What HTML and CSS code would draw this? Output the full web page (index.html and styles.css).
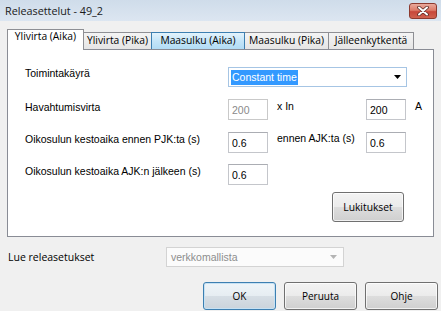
FILE: index.html
```html
<!DOCTYPE html>
<html>
<head>
<meta charset="utf-8">
<title>Releasettelut</title>
<link rel="stylesheet" href="styles.css">
</head>
<body>
<div class="window">
  <div class="titlebar">
    <span class="title">Releasettelut - 49_2</span>
    <div class="close">
      <svg width="12" height="10" viewBox="0 0 12 10">
        <path d="M2 1.5 L10 8.5 M10 1.5 L2 8.5" stroke="#5a2a24" stroke-width="3.6" stroke-linecap="round"/>
        <path d="M2 1.5 L10 8.5 M10 1.5 L2 8.5" stroke="#ffffff" stroke-width="2" stroke-linecap="round"/>
      </svg>
    </div>
  </div>

  <div class="tabs">
    <div class="tab active">Ylivirta (Aika)</div>
    <div class="tab t2">Ylivirta (Pika)</div>
    <div class="tab hover t3">Maasulku (Aika)</div>
    <div class="tab t4">Maasulku (Pika)</div>
    <div class="tab t5">Jälleenkytkentä</div>
  </div>

  <div class="panel">
    <div class="row r1">
      <div class="lbl up">Toimintakäyrä</div>
      <div class="combo main">
        <span class="sel">Constant time</span>
        <svg class="arrow" width="7" height="4" viewBox="0 0 7 4"><polygon points="0,0 7,0 3.5,4" fill="#000"/></svg>
      </div>
    </div>
    <div class="row r2">
      <div class="lbl">Havahtumisvirta</div>
      <div class="field disabled">200</div>
      <div class="unit">x In</div>
      <div class="field">200</div>
      <div class="unit">A</div>
    </div>
    <div class="row r3">
      <div class="lbl nudge">Oikosulun kestoaika ennen PJK:ta (s)</div>
      <div class="field">0.6</div>
      <div class="unit nudge">ennen AJK:ta (s)</div>
      <div class="field">0.6</div>
    </div>
    <div class="row r4">
      <div class="lbl nudge">Oikosulun kestoaika AJK:n jälkeen (s)</div>
      <div class="field">0.6</div>
    </div>
    <div class="row r5">
      <div class="btn lock">Lukitukset</div>
    </div>
  </div>

  <div class="readrow">
    <div class="readlbl">Lue releasetukset</div>
    <div class="combo off">
      <span>verkkomallista</span>
      <svg class="arrow" width="7" height="4" viewBox="0 0 7 4"><polygon points="0,0 7,0 3.5,4" fill="#b4b4b4"/></svg>
    </div>
  </div>

  <div class="buttons">
    <div class="btn default">OK</div>
    <div class="btn">Peruuta</div>
    <div class="btn">Ohje</div>
  </div>
</div>
</body>
</html>
```

FILE: styles.css
```css
html, body {
  margin: 0;
  padding: 0;
  background: #f0f0f0;
}

.window {
  width: 441px;
  height: 311px;
  overflow: hidden;
  background: #f0f0f0;
  font-family: "Liberation Sans", Arial, sans-serif;
  font-size: 10.5px;
  color: #000;
}

/* title bar */
.titlebar {
  height: 21px;
  display: flex;
  justify-content: space-between;
  align-items: center;
  background: linear-gradient(#cfdcea, #dce6f1);
  padding-left: 5px;
}

.title {
  font-family: "Open Sans", sans-serif;
  font-size: 10.8px;
  color: #1a1a1a;
}

.close {
  align-self: flex-start;
  margin-top: 3px;
  margin-right: 4px;
  width: 26px;
  height: 14px;
  border: 1px solid #8d3a2f;
  border-radius: 3px;
  background: linear-gradient(#e9a99c 0%, #dd7b69 45%, #c7473a 55%, #d0624f 100%);
  display: flex;
  align-items: center;
  justify-content: center;
}

/* tabs */
.tabs {
  display: flex;
  align-items: flex-end;
  height: 20px;
  margin-top: 8px;
  padding-left: 7px;
  position: relative;
  z-index: 1;
  font-family: "Open Sans", sans-serif;
  font-size: 10.3px;
}

.tab {
  box-sizing: border-box;
  height: 17px;
  line-height: 15px;
  border: 1px solid #8e8f94;
  border-bottom: none;
  background: linear-gradient(#f4f4f4, #e5e5e5);
  text-align: center;
  color: #000;
  margin-left: -1px;
  white-space: nowrap;
}

.tab.active {
  height: 21px;
  margin-bottom: -1px;
  margin-left: 0;
  line-height: 13px;
  background: #fff;
  width: 77px;
  position: relative;
  z-index: 2;
}

.tab.t2 { width: 69px; }
.tab.t3 { width: 94px; }
.tab.t4 { width: 85px; }
.tab.t5 { width: 86px; }

.tab.hover {
  border-color: #3c7fb1;
  background: linear-gradient(#e3f3fc, #c4e5f8 50%, #b2dcf5);
  position: relative;
  z-index: 1;
}

/* panel */
.panel {
  margin: 0 7px;
  height: 188px;
  box-sizing: border-box;
  border: 1px solid #898c95;
  background: #fff;
  padding: 17px 0 0 17px;
}

.row {
  display: grid;
  grid-template-columns: 203px 40px 98px 40px auto;
  align-items: start;
}

.r2 { margin-top: 12px; }
.r3 { margin-top: 12px; }
.r4 { margin-top: 11px; }
.r5 { margin-top: 7px; }

.lbl {
  line-height: 16px;
  white-space: nowrap;
}

.lbl.up { margin-top: -2px; }
.nudge { margin-top: -1px; }

.unit {
  line-height: 15px;
  padding-left: 9px;
  white-space: nowrap;
}

.field {
  box-sizing: border-box;
  height: 21px;
  width: 40px;
  border: 1px solid #c4c6cb;
  border-top-color: #abadb3;
  background: #fff;
  padding-left: 3px;
  line-height: 20px;
  font-size: 10.5px;
}

.field.disabled {
  color: #8a8a8a;
  border-color: #c9c9c9;
}

/* combos */
.combo {
  box-sizing: border-box;
  height: 20px;
  display: flex;
  align-items: center;
  justify-content: space-between;
  background: #fff;
  padding: 0 5px 0 2px;
}

.combo.main {
  grid-column: 2 / 6;
  width: 179px;
  border: 1px solid #a6c5e4;
}

.sel {
  background: #3399ff;
  color: #fff;
  line-height: 15px;
  padding: 0 1px;
}

.combo.off {
  width: 178px;
  border: 1px solid #d3d3d3;
  background: #fbfbfb;
  color: #8d8d8d;
  padding-left: 4px;
  padding-right: 6px;
}

/* buttons */
.btn {
  box-sizing: border-box;
  border: 1px solid #707070;
  border-radius: 3px;
  background: linear-gradient(#f3f3f3 0%, #ebebeb 50%, #dddddd 51%, #cfcfcf 100%);
  box-shadow: inset 0 0 0 1px rgba(255, 255, 255, 0.7);
  display: flex;
  align-items: center;
  justify-content: center;
  font-family: "Open Sans", sans-serif;
  font-size: 10px;
  color: #000;
}

.btn.lock {
  grid-column: 2 / 5;
  justify-self: end;
  margin-right: 2px;
  width: 72px;
  height: 30px;
  font-size: 10.3px;
}

.readrow {
  display: flex;
  align-items: center;
  margin-top: 10px;
  padding-left: 8px;
}

.readlbl {
  width: 158px;
  font-family: "Open Sans", sans-serif;
  font-size: 10.5px;
}

.buttons {
  display: flex;
  justify-content: flex-end;
  gap: 8px;
  margin-top: 15px;
  padding-right: 3px;
}

.buttons .btn {
  width: 73px;
  height: 28px;
}

.btn.default {
  border-color: #3c7fb1;
  background: linear-gradient(#eef4f8 0%, #e6edf2 50%, #d6dee5 51%, #cad3db 100%);
  box-shadow: inset 0 0 0 1px #c6e1f3;
}
```
